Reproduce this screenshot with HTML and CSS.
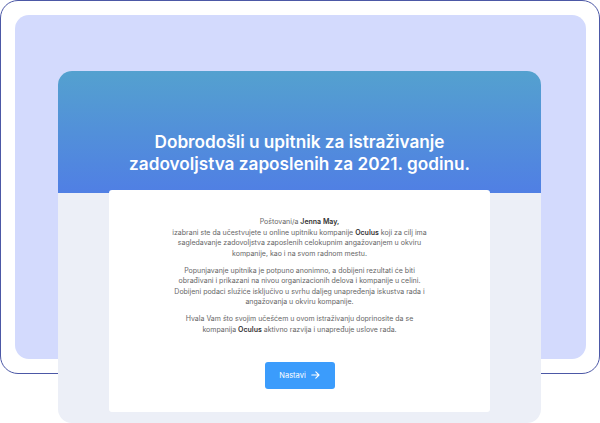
FILE: index.html
```html
<!DOCTYPE html>
<html lang="sr">
<head>
    <meta charset="UTF-8">
    <meta name="viewport" content="width=device-width, initial-scale=1.0">
    <title>Upitnik</title>
    <link rel="stylesheet" href="styles.css">
</head>
<body>
    <div class="frame">
        <div class="frame-inner"></div>
    </div>

    <div class="card">
        <div class="card-head">
            <h1>Dobrodošli u upitnik za istraživanje<br>zadovoljstva zaposlenih za 2021. godinu.</h1>
        </div>
        <div class="panel">
            <p>Poštovani/a <b>Jenna May,</b><br>
            izabrani ste da učestvujete u online upitniku kompanije <b>Oculus</b> koji za cilj ima<br>
            sagledavanje zadovoljstva zaposlenih celokupnim angažovanjem u okviru<br>
            kompanije, kao i na svom radnom mestu.</p>
            <p>Popunjavanje upitnika je potpuno anonimno, a dobijeni rezultati će biti<br>
            obrađivani i prikazani na nivou organizacionih delova i kompanije u celini.<br>
            Dobijeni podaci služiće isključivo u svrhu daljeg unapređenja iskustva rada i<br>
            angažovanja u okviru kompanije.</p>
            <p>Hvala Vam što svojim učešćem u ovom istraživanju doprinosite da se<br>
            kompanija <b>Oculus</b> aktivno razvija i unapređuje uslove rada.</p>
            <button class="btn" type="button">Nastavi
                <svg width="9" height="8" viewBox="0 0 9 8" fill="none" stroke="#fff" stroke-width="1.1" stroke-linecap="round" stroke-linejoin="round"><path d="M0.8 4h7.2M4.8 0.9L8 4 4.8 7.1"/></svg>
            </button>
        </div>
    </div>
</body>
</html>
```
FILE: styles.css
```css
body {
    margin: 0;
    width: 600px;
    height: 423px;
    overflow: hidden;
    background: #fff;
    font-family: 'Inter', 'Noto Sans', sans-serif;
    position: relative;
}
.frame {
    width: 600px;
    height: 374px;
    box-sizing: border-box;
    border: 1.5px solid #4c58a6;
    border-radius: 18px;
    padding: 14px 13.5px;
}
.frame-inner {
    height: 100%;
    background: #d3dafd;
    border-radius: 14px;
}
.card {
    position: absolute;
    left: 58px;
    top: 71px;
    width: 483px;
    height: 352px;
    background: #eceff7;
    border-radius: 14px;
    overflow: hidden;
}
.card-head {
    height: 122px;
    box-sizing: border-box;
    padding-top: 60px;
    background: linear-gradient(180deg, #54a1cf 0%, #507fe4 100%);
}
h1 {
    margin: 0;
    color: #fff;
    font-size: 17.2px;
    font-weight: 600;
    line-height: 22px;
    text-align: center;
}
.panel {
    margin: -3px 51px 0;
    height: 222px;
    box-sizing: border-box;
    padding-top: 27px;
    background: #fff;
    border-radius: 3px;
    text-align: center;
    color: #666;
    font-size: 7px;
    line-height: 10.5px;
}
.panel p {
    margin: 0 0 6.5px;
    white-space: nowrap;
}
.panel b {
    color: #333;
    font-weight: 600;
}
.btn {
    margin-top: 20px;
    width: 70px;
    height: 27px;
    border: none;
    border-radius: 3px;
    background: #3b9cfc;
    color: #fff;
    font-family: inherit;
    font-size: 7.5px;
    display: inline-flex;
    align-items: center;
    justify-content: center;
    gap: 5px;
    padding: 0;
}
```
